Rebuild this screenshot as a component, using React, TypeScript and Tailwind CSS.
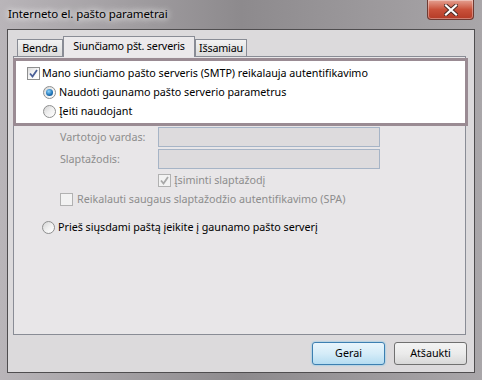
import React from "react";

const font = "font-['Noto_Sans',_'DejaVu_Sans',_sans-serif]";

function CheckBox({ checked, disabled }: { checked?: boolean; disabled?: boolean }) {
  return (
    <span
      className={`flex h-[13px] w-[13px] shrink-0 items-center justify-center border ${
        disabled
          ? "border-[#b1b1b1] bg-[#f2f2f2]"
          : "border-[#8e8f8f] bg-gradient-to-br from-[#dcdcdc] via-[#f8f8f8] to-white"
      }`}
    >
      {checked && (
        <svg width="9" height="9" viewBox="0 0 9 9">
          <path
            d="M1 4.5 L3.5 7.5 L8 1"
            fill="none"
            stroke={disabled ? "#a8a8a8" : "#4a5f97"}
            strokeWidth="1.8"
          />
        </svg>
      )}
    </span>
  );
}

function Radio({ checked }: { checked?: boolean }) {
  return (
    <span className="flex h-[13px] w-[13px] shrink-0 items-center justify-center rounded-full border border-[#8e8f8f] bg-gradient-to-br from-[#d4d4d4] via-[#f0f0f0] to-white">
      {checked && (
        <span className="h-[7px] w-[7px] rounded-full bg-[radial-gradient(circle_at_40%_35%,#8fd6ff,#1a6fb3_60%,#0d3f73)]" />
      )}
    </span>
  );
}

function Tab({ label, active, w }: { label: string; active?: boolean; w: string }) {
  return (
    <div
      className={
        active
          ? `relative z-10 -mb-px flex h-[21px] ${w} items-center justify-center border border-b-0 border-[#898c95] bg-[#ebe9eb] pb-[2px]`
          : `mt-[3px] flex h-[17px] ${w} items-center justify-center border border-b-0 border-[#898c95] bg-gradient-to-b from-[#f2f2f2] to-[#dcdcdc] pt-[1px]`
      }
    >
      {label}
    </div>
  );
}

export default function App() {
  return (
    <div
      className={`${font} relative flex h-[380px] w-[482px] flex-col overflow-hidden bg-gradient-to-r from-[#b9b5b9] via-[#8d8a8d] to-[#a9a6a9] text-[10.75px] leading-none tracking-[-0.03px] text-black`}
    >
      {/* title bar */}
      <div className="flex h-[29px] shrink-0 items-start">
        <div className="mt-[8px] pl-[8px] text-[11.5px] tracking-[-0.1px] [text-shadow:0_0_6px_#ffffff,0_0_10px_#ffffff]">
          Interneto el. pašto parametrai
        </div>
        <div className="ml-auto mr-[8px] flex h-[20px] w-[47px] items-center justify-center rounded-b-[4px] border border-t-0 border-[#6e3a32] bg-gradient-to-b from-[#e4a091] via-[#c9513a] to-[#b43a26] shadow-[inset_0_0_0_1px_rgba(255,255,255,0.35)]">
          <svg width="14" height="12" viewBox="0 0 14 12">
            <path
              d="M2 1.5 L12 10.5 M12 1.5 L2 10.5"
              stroke="#4a2a24"
              strokeWidth="4"
              strokeLinecap="square"
            />
            <path
              d="M2 1.5 L12 10.5 M12 1.5 L2 10.5"
              stroke="#ffffff"
              strokeWidth="2.2"
              strokeLinecap="square"
            />
          </svg>
        </div>
      </div>

      {/* client area */}
      <div className="mx-[7px] flex h-[344px] flex-col border border-[#4f4d4f] bg-[#dcdadc]">
        <div className="ml-[5px] mt-[6px] w-[453px]">
          {/* tabs */}
          <div className="flex items-end pl-[4px] tracking-[-0.2px]">
            <Tab label="Bendra" w="w-[46px]" />
            <Tab label="Siunčiamo pšt. serveris" w="w-[132px]" active />
            <Tab label="Išsamiau" w="w-[52px]" />
          </div>

          {/* panel */}
          <div className="flex h-[279px] flex-col border border-[#898c95] bg-[#e8e6e8]">
            {/* highlighted box */}
            <div className="-ml-px -mr-[3px] mt-px flex flex-col border-[3px] border-[#9a8b93] bg-white pt-[3px] pb-[2px]">
              <div className="flex h-[19px] items-center gap-[2px] pl-[11px]">
                <CheckBox checked />
                <span>Mano siunčiamo pašto serveris (SMTP) reikalauja autentifikavimo</span>
              </div>
              <div className="flex h-[19px] items-center gap-[3px] pl-[27px]">
                <Radio checked />
                <span>Naudoti gaunamo pašto serverio parametrus</span>
              </div>
              <div className="flex h-[19px] items-center gap-[3px] pl-[27px]">
                <Radio />
                <span>Įeiti naudojant</span>
              </div>
            </div>

            {/* disabled fields */}
            <div className="mt-px flex h-[20px] items-center pl-[46px] text-[#8d8d8d]">
              <span className="w-[98px]">Vartotojo vardas:</span>
              <span className="h-[20px] w-[222px] border border-[#a6b4c6] bg-[#dddbdd]" />
            </div>
            <div className="mt-[2px] flex h-[20px] items-center pl-[46px] text-[#8d8d8d]">
              <span className="w-[98px]">Slaptažodis:</span>
              <span className="h-[20px] w-[222px] border border-[#a6b4c6] bg-[#dddbdd]" />
            </div>
            <div className="mt-[2px] flex h-[19px] items-center gap-[3px] pl-[144px] text-[#8d8d8d]">
              <CheckBox checked disabled />
              <span>Įsiminti slaptažodį</span>
            </div>
            <div className="flex h-[19px] items-center gap-[4px] pl-[46px] text-[#8d8d8d]">
              <CheckBox disabled />
              <span>Reikalauti saugaus slaptažodžio autentifikavimo (SPA)</span>
            </div>
            <div className="mt-[9px] flex h-[19px] items-center gap-[3px] pl-[28px]">
              <Radio />
              <span>Prieš siųsdami paštą įeikite į gaunamo pašto serverį</span>
            </div>
          </div>
        </div>

        {/* buttons */}
        <div className="mr-[7px] mt-[7px] flex justify-end gap-[9px]">
          <button className="flex h-[23px] w-[73px] items-center justify-center rounded-[3px] border border-[#3c7fb1] bg-gradient-to-b from-[#e8f5fc] via-[#d5ecf8] to-[#b5dcf1] shadow-[0_0_2px_#5ec2ee]">
            Gerai
          </button>
          <button className="flex h-[23px] w-[73px] items-center justify-center rounded-[3px] border border-[#707070] bg-gradient-to-b from-[#f3f3f3] via-[#ebebeb] to-[#d8d8d8]">
            Atšaukti
          </button>
        </div>
      </div>
    </div>
  );
}
